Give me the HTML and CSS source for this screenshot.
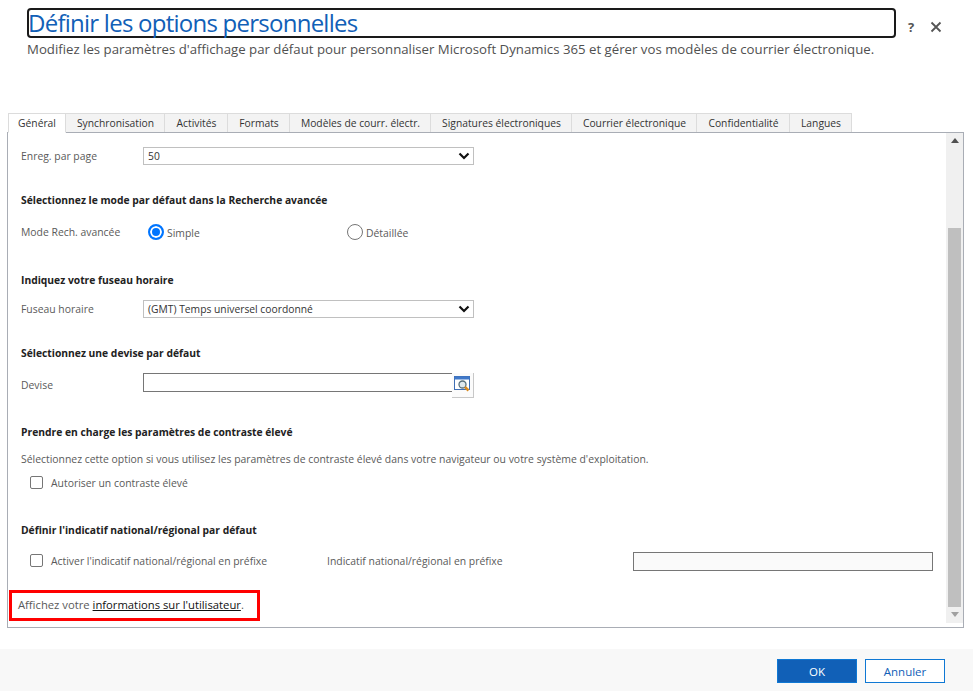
FILE: index.html
```html
<!DOCTYPE html>
<html lang="fr">
<head>
<meta charset="utf-8">
<title>Définir les options personnelles</title>
<link rel="stylesheet" href="styles.css">
</head>
<body>
<div class="dialog">
  <header class="head">
    <div class="head-main">
      <h1 class="title">Définir les options personnelles</h1>
      <p class="subtitle">Modifiez les paramètres d'affichage par défaut pour personnaliser Microsoft Dynamics 365 et gérer vos modèles de courrier électronique.</p>
    </div>
    <div class="head-actions">
      <span class="help">?</span>
      <svg class="close" width="12" height="12" viewBox="0 0 12 12"><path d="M1.500 1.500l9 9M10.500 1.500l-9 9" stroke="#555" stroke-width="1.800" fill="none"/></svg>
    </div>
  </header>

  <nav class="tabs">
    <span class="tab tab-active w58">Général</span>
    <span class="tab w99">Synchronisation</span>
    <span class="tab w63">Activités</span>
    <span class="tab w62">Formats</span>
    <span class="tab w141">Modèles de courr. électr.</span>
    <span class="tab w141b">Signatures électroniques</span>
    <span class="tab w125">Courrier électronique</span>
    <span class="tab w93">Confidentialité</span>
    <span class="tab w62b">Langues</span>
  </nav>

  <section class="panel">
    <div class="content">
      <div class="row row-first">
        <label class="lbl">Enreg. par page</label>
        <div class="select">50<svg class="chev" width="12" height="8" viewBox="0 0 12 8"><path d="M1.500 1.500L6 6l4.500-4.500" stroke="#111" stroke-width="2.200" fill="none"/></svg></div>
      </div>

      <h2 class="h h-mode">Sélectionnez le mode par défaut dans la Recherche avancée</h2>
      <div class="row row-radio">
        <label class="lbl">Mode Rech. avancée</label>
        <span class="radio radio-on"></span><span class="radio-text simple">Simple</span>
        <span class="radio"></span><span class="radio-text">Détaillée</span>
      </div>

      <h2 class="h h-tz">Indiquez votre fuseau horaire</h2>
      <div class="row row-tz">
        <label class="lbl">Fuseau horaire</label>
        <div class="select">(GMT) Temps universel coordonné<svg class="chev" width="12" height="8" viewBox="0 0 12 8"><path d="M1.500 1.500L6 6l4.500-4.500" stroke="#111" stroke-width="2.200" fill="none"/></svg></div>
      </div>

      <h2 class="h h-cur">Sélectionnez une devise par défaut</h2>
      <div class="row row-cur">
        <label class="lbl lbl-devise">Devise</label>
        <div class="lookup">
          <div class="lookup-input"></div>
          <div class="lookup-btn">
            <svg width="17" height="17" viewBox="0 0 17 17">
              <rect x="0.500" y="0.500" width="15" height="13" fill="#fff" stroke="#3f6fb5"/>
              <rect x="0.500" y="0.500" width="15" height="3" fill="#3f78c9"/>
              <circle cx="8.500" cy="8.500" r="3.500" fill="#dfe9ee" stroke="#58707c" stroke-width="1.300"/>
              <path d="M11 11l3.500 3.500" stroke="#d98a20" stroke-width="2.500"/>
            </svg>
          </div>
        </div>
      </div>

      <h2 class="h h-con">Prendre en charge les paramètres de contraste élevé</h2>
      <p class="desc">Sélectionnez cette option si vous utilisez les paramètres de contraste élevé dans votre navigateur ou votre système d'exploitation.</p>
      <div class="check-row check-con">
        <span class="check"></span><span class="lbl">Autoriser un contraste élevé</span>
      </div>

      <h2 class="h h-ind">Définir l'indicatif national/régional par défaut</h2>
      <div class="check-row check-ind">
        <span class="check"></span><span class="lbl lbl-activate">Activer l'indicatif national/régional en préfixe</span>
        <span class="lbl lbl-prefix">Indicatif national/régional en préfixe</span>
        <div class="prefix-input"></div>
      </div>

      <p class="info">Affichez votre <a class="link" href="#">informations sur l'utilisateur</a>.</p>
      <div class="redbox"></div>
    </div>
    <div class="scroll">
      <span class="arrow-up"></span>
      <span class="thumb"></span>
      <span class="arrow-down"></span>
    </div>
  </section>

  <footer class="foot">
    <button class="btn btn-ok">OK</button>
    <button class="btn btn-cancel">Annuler</button>
  </footer>
</div>
</body>
</html>
```
FILE: styles.css
```css
* { box-sizing: border-box; }
html, body { margin: 0; padding: 0; background: #fff; }
body { font-family: "Open Sans", "Noto Sans", sans-serif; color: #444; }
.dialog { width: 973px; height: 691px; display: flex; flex-direction: column; overflow: hidden; }

.head { display: flex; height: 113px; padding: 8px 0 0 27px; }
.head-main { width: 869px; }
.title { margin: 0; height: 30px; border: 2px solid #1a1a1a; border-radius: 4px; font-weight: 400; font-size: 24px; line-height: 26px; letter-spacing: -0.750px; text-indent: -1px; color: #1160b7; white-space: nowrap; }
.subtitle { margin: 2px 0 0; font-size: 13.230px; line-height: 18px; color: #505050; white-space: nowrap; }
.head-actions { display: flex; align-items: center; height: 38px; padding-left: 12px; gap: 14px; }
.help { font-size: 13px; font-weight: 700; color: #555; width: 8px; }
.close { display: block; }

.tabs { display: flex; height: 20px; padding-left: 8px; }
.tab { height: 20px; padding-left: 1px; font-size: 10.300px; line-height: 19px; text-align: center; background: #f3f3f3; border: 1px solid #dcdcdc; border-left: 0; border-bottom: 1px solid #a9adb5; color: #333; white-space: nowrap; }
.tab-active { padding-left: 0; background: #fff; border-bottom-color: #fff; border-left: 1px solid #dcdcdc; position: relative; z-index: 1; }
.w58 { width: 58px; } .w99 { width: 99px; } .w63 { width: 63px; } .w62 { width: 62px; }
.w141 { width: 141px; } .w141b { width: 141px; } .w125 { width: 125px; } .w93 { width: 93px; } .w62b { width: 62px; }

.panel { display: flex; align-items: flex-start; width: 957px; height: 497px; margin: -1px 0 0 7px; border: 1px solid #a9adb5; }
.content { position: relative; flex: 1; padding-left: 13px; min-width: 0; }
.scroll { width: 17px; height: 490px; background: #f0f0f0; display: flex; flex-direction: column; align-items: center; }
.arrow-up { width: 0; height: 0; margin-top: 5px; border: 4px solid transparent; border-top: 0; border-bottom: 5px solid #505050; }
.thumb { width: 13px; height: 379px; margin-top: 85px; background: #bfbfbf; }
.arrow-down { width: 0; height: 0; margin-top: 5px; border: 4px solid transparent; border-bottom: 0; border-top: 5px solid #a0a0a0; }

.row { display: flex; align-items: center; height: 18px; }
.lbl { font-size: 10.400px; line-height: 18px; color: #5a5a5a; white-space: nowrap; }
.row .lbl { width: 122px; flex: none; }
.select { width: 331px; height: 18px; border: 1px solid #c0c0c0; display: flex; align-items: center; justify-content: space-between; padding: 0 3px 0 4px; font-size: 10.300px; color: #333; white-space: nowrap; }
.chev { display: block; }
.h { margin: 0; font-size: 10.300px; line-height: 14px; font-weight: 700; color: #222; white-space: nowrap; }

.row-first { margin-top: 14px; }
.h-mode { margin-top: 28px; }
.row-radio { margin-top: 16px; }
.radio { width: 16px; height: 16px; flex: none; border: 1px solid #767676; border-radius: 50%; background: #fff; margin-left: 4px; }
.radio-on { margin-left: 5px; border: 2px solid #0075ff; box-shadow: inset 0 0 0 2px #fff; background: #0075ff; }
.radio-text { margin: 2px 0 0 3px; font-size: 10.400px; color: #5a5a5a; }
.simple { width: 176px; flex: none; }
.h-tz { margin-top: 32px; }
.row-tz { margin-top: 13px; }
.h-cur { margin-top: 28px; }
.row-cur { margin-top: 14px; }
.row .lbl-devise { margin-top: 4px; }
.lookup { display: flex; width: 331px; }
.lookup-input { flex: 1; height: 19px; border: 1px solid #767676; border-right: 0; }
.lookup-btn { width: 22px; height: 25px; border-right: 1px solid #c8c8c8; border-bottom: 1px solid #c8c8c8; padding: 3px 0 0 2px; background: #fbfbfb; margin-bottom: -7px; }
.lookup-btn svg { display: block; }
.h-con { margin-top: 33px; }
.desc { margin: 13px 0 0; font-size: 10.420px; line-height: 14px; color: #5a5a5a; white-space: nowrap; }
.check-row { display: flex; align-items: center; height: 18px; padding-left: 9px; }
.check-con { margin-top: 8px; }
.check { width: 13px; height: 13px; flex: none; border: 1px solid #767676; border-radius: 2px; background: #fff; margin-right: 8px; }
.h-ind { margin-top: 31px; }
.check-ind { margin-top: 15px; }
.check-ind .lbl-activate { width: 276px; flex: none; }
.lbl-prefix { width: 306px; flex: none; }
.prefix-input { width: 300px; height: 19px; margin-top: 2px; border: 1px solid #767676; background: #fafafa; }

.info { margin: 28px 0 0 -3px; font-size: 11.250px; line-height: 14px; color: #5a5a5a; white-space: nowrap; }
.link { color: #111; text-decoration: underline; }
.redbox { position: absolute; left: 1px; top: 457px; width: 251px; height: 31px; border: 3px solid #f00; pointer-events: none; }

.foot { display: flex; justify-content: flex-end; gap: 8px; height: 42px; margin-top: 21px; padding: 10px 28px 0 0; background: #f8f8f8; }
.btn { width: 80px; height: 24px; font-family: inherit; font-size: 11.500px; padding: 0; border: 1px solid #0f6cbd; }
.btn-ok { background: #1160b7; color: #fff; border-color: #0f78d4; }
.btn-cancel { background: #fff; color: #1160b7; border-color: #0f78d4; }
```
